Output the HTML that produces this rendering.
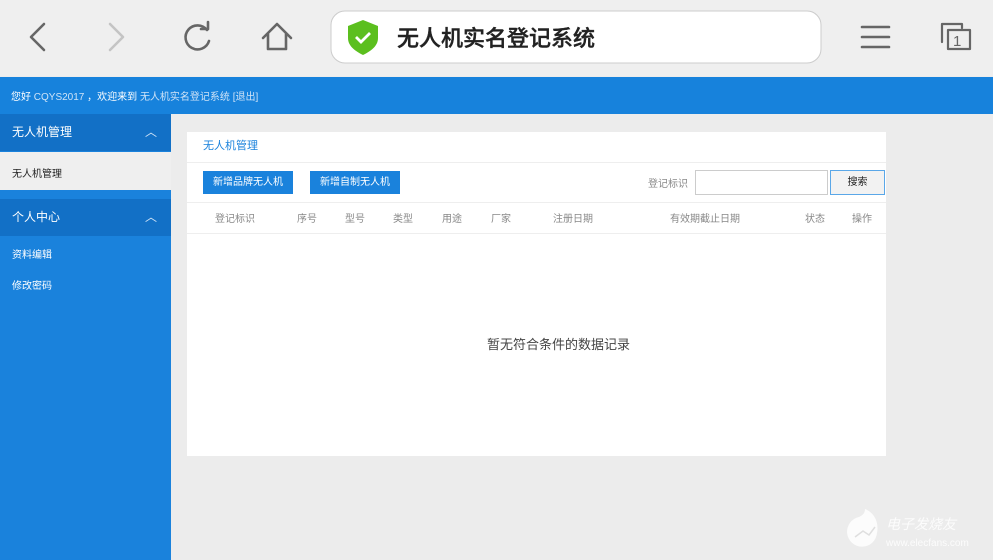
<!DOCTYPE html>
<html><head><meta charset="utf-8"><style>
*{margin:0;padding:0;box-sizing:border-box}
body{width:993px;height:560px;overflow:hidden;background:#ececec;font-family:"Liberation Sans","Noto Sans CJK SC",sans-serif;position:relative}
.abs{position:absolute;white-space:nowrap}
</style></head><body>
<div class="abs" style="left:0;top:0;width:993px;height:76px;background:#efefef"></div>
<svg class="abs" style="left:0;top:0" width="993" height="76">
<g fill="none" stroke="#666" stroke-width="2.6" stroke-linecap="round" stroke-linejoin="round">
<path d="M44 24 L31 37 L44 50"/>
<path d="M110 24 L123 37 L110 50" stroke="#c4c4c4"/>
<path d="M207 30 A12 12 0 1 0 209 41"/>
<path d="M201 29 L208 29 L208 22" />
<path d="M263 38 L277 24 L291 38 M268 34 V49 H286 V34"/>
<path d="M862 27 H889 M862 37 H889 M862 47 H889"/>
<path d="M942 42 V24 H962 V28" stroke-width="2.2"/>
<rect x="948" y="30" width="22" height="19" stroke-width="2.2"/>
</g>
<text x="953" y="46" font-family="Liberation Sans" font-size="15" fill="#666">1</text>
<rect x="331" y="11" width="490" height="52" rx="14" fill="#fff" stroke="#ccc"/>
<path d="M363 20 L378 26 V38 C378 46 371 51 363 55 C355 51 348 46 348 38 V26 Z" fill="#5bbf1e"/>
<path d="M356 37 L361 42 L370 33" stroke="#fff" stroke-width="2.8" fill="none"/>
</svg>
<div class="abs" style="left:397px;top:21px;font-size:22px;color:#222;font-weight:500;-webkit-text-stroke:0.4px #222">无人机实名登记系统</div>
<div class="abs" style="left:0;top:77px;width:993px;height:37px;background:#1782dc"></div>
<div class="abs" style="left:11px;top:88px;font-size:10px;color:#fff">您好 <span style="color:#cfe3f7">CQYS2017</span> ，欢迎来到 <span style="color:#cfe3f7">无人机实名登记系统 [退出]</span></div>
<div class="abs" style="left:0;top:114px;width:171px;height:446px;background:#1a82dc"></div>
<div class="abs" style="left:0;top:114px;width:171px;height:37px;background:#1270c6"></div>
<div class="abs" style="left:12px;top:123px;font-size:12px;color:#fff">无人机管理</div>
<div class="abs" style="left:145px;top:123px;font-size:12px;color:#cfe3f7">︿</div>
<div class="abs" style="left:0;top:152px;width:171px;height:38px;background:#efefef"></div>
<div class="abs" style="left:12px;top:165px;font-size:10px;color:#222">无人机管理</div>
<div class="abs" style="left:0;top:199px;width:171px;height:37px;background:#1270c6"></div>
<div class="abs" style="left:12px;top:208px;font-size:12px;color:#fff">个人中心</div>
<div class="abs" style="left:145px;top:208px;font-size:12px;color:#cfe3f7">︿</div>
<div class="abs" style="left:12px;top:246px;font-size:10px;color:#fff">资料编辑</div>
<div class="abs" style="left:12px;top:277px;font-size:10px;color:#fff">修改密码</div>
<div class="abs" style="left:187px;top:132px;width:699px;height:324px;background:#fff"></div>
<div class="abs" style="left:187px;top:162px;width:699px;height:1px;background:#eee"></div>
<div class="abs" style="left:187px;top:202px;width:699px;height:1px;background:#eee"></div>
<div class="abs" style="left:187px;top:233px;width:699px;height:1px;background:#eee"></div>
<div class="abs" style="left:203px;top:137px;font-size:11px;color:#1a82dc">无人机管理</div>
<div class="abs" style="left:203px;top:171px;width:90px;height:23px;background:#1a82dc;color:#fff;font-size:10px;text-align:center;line-height:23px">新增品牌无人机</div>
<div class="abs" style="left:310px;top:171px;width:90px;height:23px;background:#1a82dc;color:#fff;font-size:10px;text-align:center;line-height:23px">新增自制无人机</div>
<div class="abs" style="left:648px;top:175px;font-size:10px;color:#888">登记标识</div>
<div class="abs" style="left:695px;top:170px;width:133px;height:25px;border:1px solid #ccc"></div>
<div class="abs" style="left:830px;top:170px;width:55px;height:25px;border:1px solid #5aa7e8;background:#f2f2f2;font-size:10px;text-align:center;line-height:23px;color:#222">搜索</div>
<div class="abs" style="top:210px;left:0;font-size:10px;color:#888">
<span class="abs" style="left:215px">登记标识</span><span class="abs" style="left:297px">序号</span><span class="abs" style="left:345px">型号</span><span class="abs" style="left:393px">类型</span><span class="abs" style="left:442px">用途</span><span class="abs" style="left:491px">厂家</span><span class="abs" style="left:553px">注册日期</span><span class="abs" style="left:670px">有效期截止日期</span><span class="abs" style="left:805px">状态</span><span class="abs" style="left:852px">操作</span></div>
<div class="abs" style="left:487px;top:334px;font-size:13px;color:#444">暂无符合条件的数据记录</div>
<svg class="abs" style="left:845px;top:505px;opacity:.85" width="40" height="45"><path d="M20 4 C30 8 34 18 32 28 A15 15 0 1 1 14 12 C18 10 20 8 20 4Z" fill="#fff"/><path d="M10 32 L18 26 L24 30 L30 22" stroke="#ddd" stroke-width="1.5" fill="none"/></svg>
<div class="abs" style="left:886px;top:514px;font-size:14px;color:#fff;font-style:italic;opacity:.85">电子发烧友</div>
<div class="abs" style="left:886px;top:538px;font-size:10px;color:#fff;opacity:.85">www.elecfans.com</div>
</body></html>
